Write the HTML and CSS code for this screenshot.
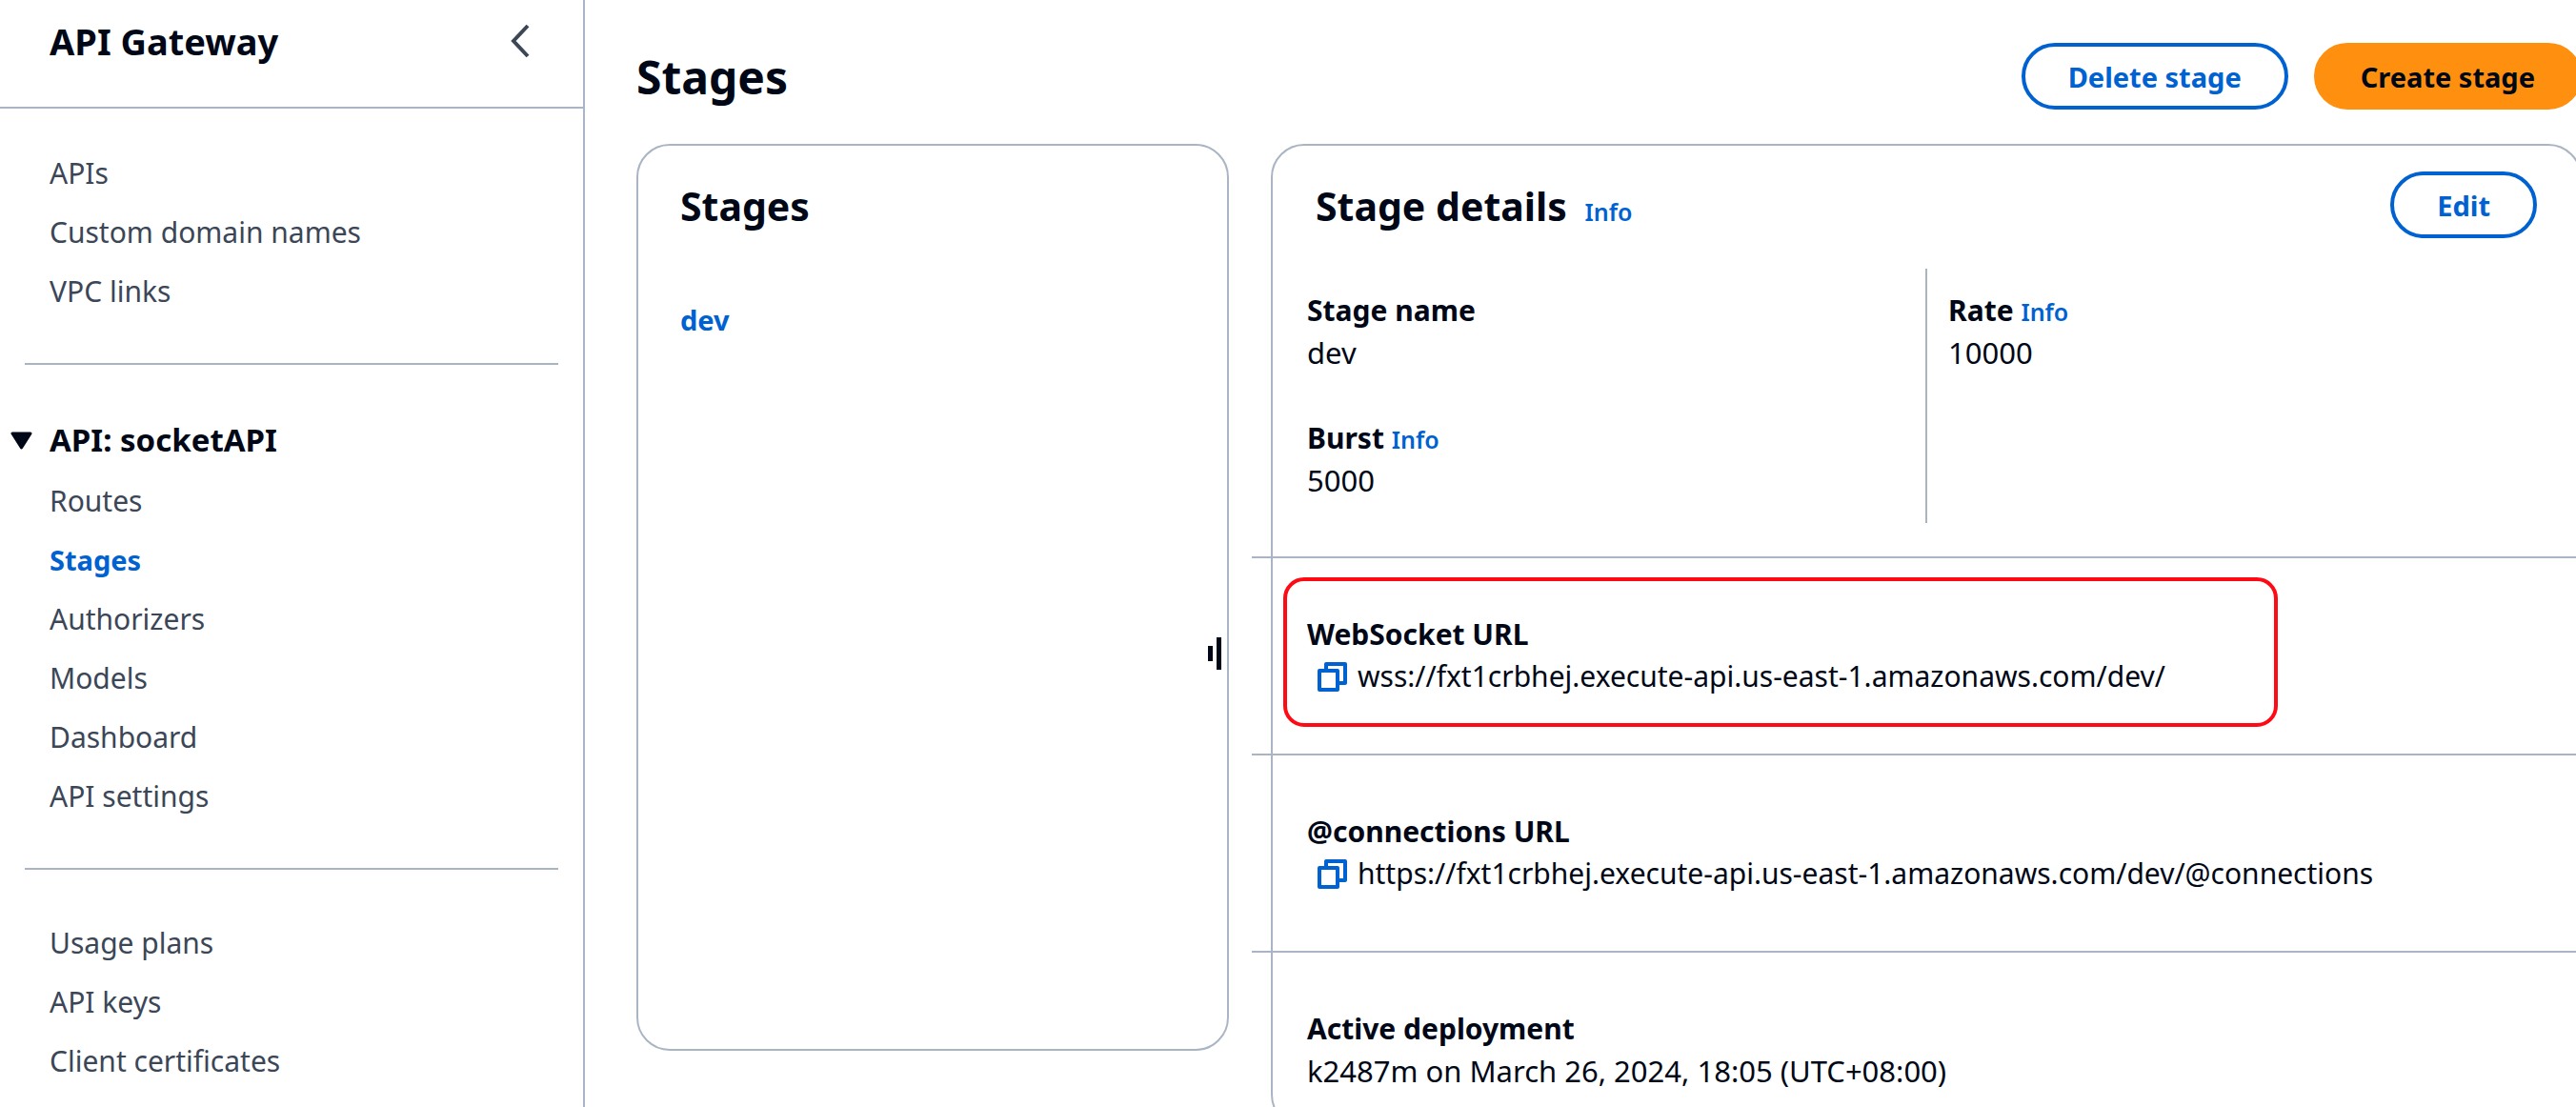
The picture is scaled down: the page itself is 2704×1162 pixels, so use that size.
FILE: index.html
```html
<!DOCTYPE html>
<html lang="en">
<head>
<meta charset="utf-8">
<title>Stages - API Gateway</title>
<link rel="stylesheet" href="styles.css">
</head>
<body>
<div class="app">
  <aside class="sidebar">
    <header class="sidebar-header">
      <h2 class="sidebar-title">API Gateway</h2>
      <button class="icon-button" type="button" aria-label="Close navigation">
        <svg width="22" height="36" viewBox="0 0 22 36" fill="none" stroke="#3b4657" stroke-width="4"><path d="M19 2 4 18l15 16"/></svg>
      </button>
    </header>
    <nav class="nav" aria-label="API Gateway">
      <ul class="nav-list">
        <li><a href="#apis">APIs</a></li>
        <li><a href="#domains">Custom domain names</a></li>
        <li><a href="#vpc">VPC links</a></li>
      </ul>
      <hr class="nav-divider">
      <button class="nav-section" type="button" aria-expanded="true">
        <svg width="23" height="19" viewBox="0 0 23 19" fill="#000716" stroke="#000716" stroke-width="3" stroke-linejoin="round"><path d="M2 2h19l-9.500 15z"/></svg>
        API: socketAPI
      </button>
      <ul class="nav-list">
        <li><a href="#routes">Routes</a></li>
        <li><a class="active" href="#stages" aria-current="page">Stages</a></li>
        <li><a href="#authorizers">Authorizers</a></li>
        <li><a href="#models">Models</a></li>
        <li><a href="#dashboard">Dashboard</a></li>
        <li><a href="#settings">API settings</a></li>
      </ul>
      <hr class="nav-divider">
      <ul class="nav-list">
        <li><a href="#plans">Usage plans</a></li>
        <li><a href="#keys">API keys</a></li>
        <li><a href="#certificates">Client certificates</a></li>
      </ul>
    </nav>
  </aside>

  <main class="main">
    <header class="page-header">
      <h1 class="page-title">Stages</h1>
      <div class="actions">
        <button class="button" type="button">Delete stage</button>
        <button class="button primary" type="button">Create stage</button>
      </div>
    </header>

    <div class="panels">
      <section class="card stage-list">
        <h2 class="card-title">Stages</h2>
        <a class="stage-link" href="#dev">dev</a>
        <button class="resize-handle" type="button" aria-label="Resize panel">
          <svg width="16" height="34" viewBox="0 0 16 34" fill="#000716"><path d="M1 9h5v16H1zM10 0h5v34h-5z"/></svg>
        </button>
      </section>

      <section class="card">
        <header class="card-header">
          <h2 class="card-title">Stage details <a class="info" href="#details-info">Info</a></h2>
          <button class="button" type="button">Edit</button>
        </header>
        <div class="columns">
          <dl class="column">
            <div><dt>Stage name</dt><dd>dev</dd></div>
            <div><dt>Burst <a class="info" href="#burst-info">Info</a></dt><dd>5000</dd></div>
          </dl>
          <dl class="column">
            <div><dt>Rate <a class="info" href="#rate-info">Info</a></dt><dd>10000</dd></div>
          </dl>
        </div>
        <dl class="row highlighted">
          <dt>WebSocket URL</dt>
          <dd class="url">
            <button class="icon-button" type="button" aria-label="Copy WebSocket URL">
              <svg width="31" height="31" viewBox="0 0 31 31" fill="none" stroke="#0062d1" stroke-width="4" stroke-linejoin="round"><path d="M2 9h19v20H2zM9 9V2h20v20h-8"/></svg>
            </button>
            wss://fxt1crbhej.execute-api.us-east-1.amazonaws.com/dev/
          </dd>
        </dl>
        <dl class="row">
          <dt>@connections URL</dt>
          <dd class="url">
            <button class="icon-button" type="button" aria-label="Copy @connections URL">
              <svg width="31" height="31" viewBox="0 0 31 31" fill="none" stroke="#0062d1" stroke-width="4" stroke-linejoin="round"><path d="M2 9h19v20H2zM9 9V2h20v20h-8"/></svg>
            </button>
            https://fxt1crbhej.execute-api.us-east-1.amazonaws.com/dev/@connections
          </dd>
        </dl>
        <dl class="row last">
          <dt>Active deployment</dt>
          <dd>k2487m on March 26, 2024, 18:05 (UTC+08:00)</dd>
        </dl>
      </section>
    </div>
  </main>
</div>
</body>
</html>
```
FILE: styles.css
```css
:root {
  --text: #000716;
  --muted: #3b4657;
  --link: #0062d1;
  --line: #aab5c4;
  --accent: #ff900f;
}

*,
*::after {
  box-sizing: border-box;
}

body {
  margin: 0;
  background: #fff;
  color: var(--text);
  font: 400 30px/44px "Noto Sans", "Open Sans", sans-serif;
}

h1, h2, ul, dl, dd {
  margin: 0;
  padding: 0;
}

a {
  color: var(--link);
  text-decoration: none;
}

button {
  font: inherit;
  color: inherit;
  cursor: pointer;
}

.app {
  display: flex;
  height: 100vh;
  overflow: hidden;
}

/* Side navigation */
.sidebar {
  flex: 0 0 614px;
  border-right: 2px solid var(--line);
}

.sidebar-header {
  display: flex;
  align-items: center;
  justify-content: space-between;
  padding: 21px 55px 47px 52px;
  border-bottom: 2px solid var(--line);
}

.sidebar-title {
  font-size: 38px;
  font-weight: 700;
}

.icon-button {
  display: flex;
  padding: 0;
  border: 0;
  background: none;
}

.nav {
  padding: 46px 26px;
}

.nav-list {
  display: flex;
  flex-direction: column;
  gap: 18px;
  padding-left: 26px;
  list-style: none;
}

.nav-list a {
  display: block;
  color: var(--muted);
}

.nav-list .active {
  color: var(--link);
  font-size: 29px;
  font-weight: 700;
}

.nav-divider {
  height: 2px;
  margin: 53px 0 55px;
  border: 0;
  background: var(--line);
}

.nav-section {
  display: flex;
  align-items: center;
  gap: 18px;
  margin: 0 0 18px -15px;
  padding: 0;
  border: 0;
  background: none;
  font-size: 33px;
  font-weight: 700;
  line-height: 48px;
}

/* Page content */
.main {
  flex: 1;
  min-width: 0;
  margin-right: -6px;
  padding: 45px 0 0 54px;
}

.page-header {
  display: flex;
  justify-content: space-between;
  margin-bottom: 36px;
}

.page-title {
  font-size: 48px;
  font-weight: 700;
  line-height: 72px;
}

.actions {
  display: flex;
  gap: 27px;
  height: 70px;
}

.button {
  height: 70px;
  padding: 2px 45px 0;
  border: 4px solid var(--link);
  border-radius: 35px;
  background: #fff;
  color: var(--link);
  font-size: 29px;
  font-weight: 700;
}

.button.primary {
  border-color: var(--accent);
  background: var(--accent);
  color: var(--text);
}

.panels {
  display: grid;
  grid-template-columns: 622px 1fr;
  align-items: start;
  gap: 44px;
  margin-top: -2px;
}

.card {
  position: relative;
  padding-top: 27px;
  border: 2px solid var(--line);
  border-radius: 35px;
}

.card-title {
  font-size: 41px;
  font-weight: 700;
  line-height: 72px;
}

.info {
  font-size: 25px;
  font-weight: 600;
  line-height: 1;
}

.card-title .info {
  margin-left: 8px;
}

.stage-list {
  display: flex;
  flex-direction: column;
  align-items: start;
  gap: 62px;
  min-height: 952px;
  padding-left: 44px;
}

.stage-link {
  font-size: 29px;
  font-weight: 700;
}

.resize-handle {
  position: absolute;
  top: 516px;
  right: 5px;
  display: flex;
  padding: 0;
  border: 0;
  background: none;
}

.card-header {
  display: flex;
  justify-content: space-between;
  padding: 0 45px;
}

.columns {
  display: grid;
  grid-template-columns: 1fr 1fr;
  margin: 30px -20px 35px -22px;
}

.column {
  display: flex;
  flex-direction: column;
  gap: 46px;
  padding: 22px 22px 23px;
}

.column:first-child {
  padding-left: 58px;
}

.column + .column {
  border-left: 2px solid var(--line);
}

dt {
  font-weight: 700;
}

dd {
  font-size: 31px;
}

.row {
  position: relative;
  margin: 0 -22px;
  padding: 58px 58px 59px;
  border-top: 2px solid var(--line);
}

.row.last {
  padding-bottom: 36px;
}

.url {
  display: flex;
  align-items: center;
  gap: 11px;
  padding-left: 11px;
  font-size: 30px;
}

/* Callout drawn round the WebSocket URL */
.highlighted::after {
  content: "";
  position: absolute;
  top: 20px;
  left: 33px;
  width: 1044px;
  height: 157px;
  border: 4px solid #ff0a14;
  border-radius: 22px;
  pointer-events: none;
}
```
